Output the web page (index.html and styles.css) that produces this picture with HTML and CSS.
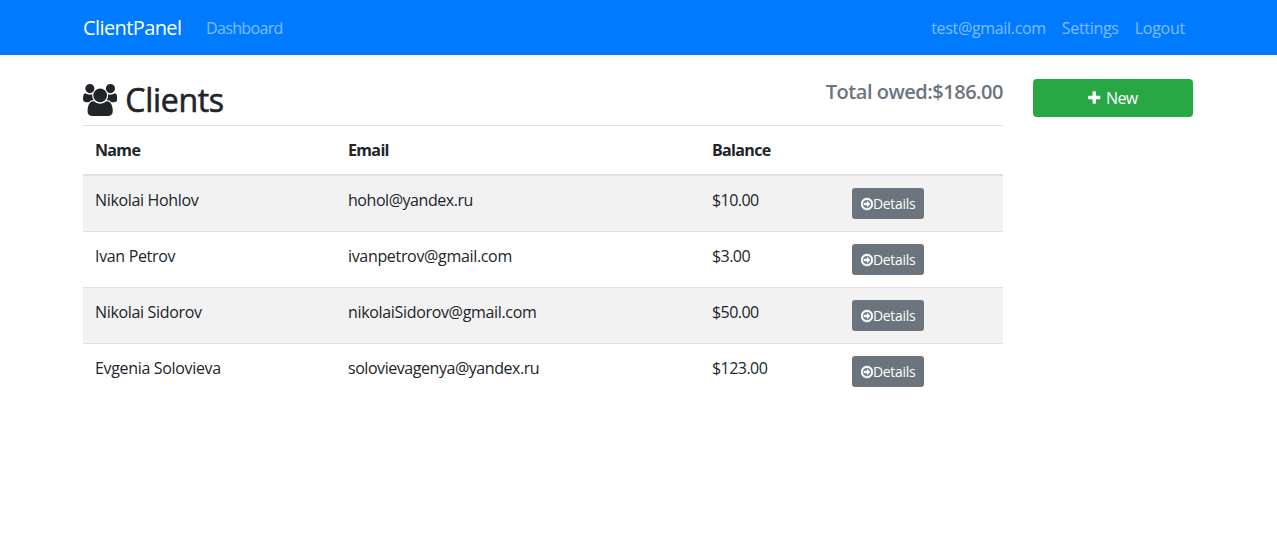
FILE: index.html
```html
<!DOCTYPE html>
<html lang="en">
<head>
<meta charset="utf-8">
<title>ClientPanel</title>
<link rel="stylesheet" href="styles.css">
</head>
<body>
<svg class="sprite" aria-hidden="true">
  <symbol id="users" viewBox="0 0 1920 1792"><path d="M593 896q-162 5-265 128H194q-82 0-138-40.500T0 865q0-353 124-353 6 0 43.500 21t97.500 42.500T384 597q67 0 133-23-5 37-5 66 0 139 81 256zm1071 637q0 120-73 189.500t-194 69.500H523q-121 0-194-69.500T256 1533q0-53 3.500-103.500t14-109T300 1212t43-97.500 62-81 85.500-53.500T602 960q10 0 43 21.500t73 48 107 48 135 21.500 135-21.500 107-48 73-48 43-21.500q61 0 111.500 20t85.500 53.500 62 81 43 97.500 26.500 108.500 14 109 3.500 103.500zM640 256q0 106-75 181t-181 75-181-75-75-181 75-181T384 0t181 75 75 181zm704 384q0 159-112.500 271.500T960 1024 688.500 911.500 576 640t112.500-271.500T960 256t271.500 112.500T1344 640zm576 225q0 78-56 118.500t-138 40.500h-134q-103-123-265-128 81-117 81-256 0-29-5-66 66 23 133 23 59 0 119-21.500t97.500-42.500 43.500-21q124 0 124 353zm-128-609q0 106-75 181t-181 75-181-75-75-181 75-181 181-75 181 75 75 181z"/></symbol>
  <symbol id="plus" viewBox="192 0 1408 1792"><path d="M1600 736v192q0 40-28 68t-68 28h-416v416q0 40-28 68t-68 28h-192q-40 0-68-28t-28-68v-416h-416q-40 0-68-28t-28-68v-192q0-40 28-68t68-28h416v-416q0-40 28-68t68-28h192q40 0 68 28t28 68v416h416q40 0 68 28t28 68z"/></symbol>
  <symbol id="arrow" viewBox="133 0 1536 1792"><path d="M1285 896q0 13-10 23l-320 320q-10 9-23 9-13 0-22.500-9.500t-9.500-22.500v-192h-352q-13 0-22.500-9.500t-9.500-22.500v-192q0-13 9.500-22.500t22.500-9.500h352v-192q0-14 9-23t23-9q12 0 24 10l319 319q9 9 9 23zm160 0q0-148-73-273t-198-198-273-73-273 73-198 198-73 273 73 273 198 198 273 73 273-73 198-198 73-273zm224 0q0 209-103 385.500t-279.500 279.500-385.500 103-385.500-103-279.500-279.500-103-385.500 103-385.500 279.500-279.500 385.500-103 385.500 103 279.500 279.500 103 385.500z"/></symbol>
</svg>
<nav class="navbar">
  <div class="container nav-row">
    <a class="brand">ClientPanel</a>
    <a class="nav-link dashboard">Dashboard</a>
    <div class="nav-right">
      <a class="nav-link mail">test@gmail.com</a>
      <a class="nav-link settings">Settings</a>
      <a class="nav-link logout">Logout</a>
    </div>
  </div>
</nav>
<div class="container page">
  <main class="main">
    <header class="head">
      <h2 class="title"><svg class="icon-users"><use href="#users"/></svg><span>Clients</span></h2>
      <h5 class="total">Total owed:$186.00</h5>
    </header>
    <table class="table">
      <colgroup><col class="c1"><col class="c2"><col class="c3"><col class="c4"></colgroup>
      <thead><tr><th>Name</th><th>Email</th><th>Balance</th><th></th></tr></thead>
      <tbody>
        <tr><td>Nikolai Hohlov</td><td class="email-ru">hohol@yandex.ru</td><td class="money">$10.00</td><td><a class="details"><svg class="icon-arrow"><use href="#arrow"/></svg><span>Details</span></a></td></tr>
        <tr><td>Ivan Petrov</td><td>ivanpetrov@gmail.com</td><td class="money">$3.00</td><td><a class="details"><svg class="icon-arrow"><use href="#arrow"/></svg><span>Details</span></a></td></tr>
        <tr><td>Nikolai Sidorov</td><td>nikolaiSidorov@gmail.com</td><td class="money">$50.00</td><td><a class="details"><svg class="icon-arrow"><use href="#arrow"/></svg><span>Details</span></a></td></tr>
        <tr><td>Evgenia Solovieva</td><td class="email-ru">solovievagenya@yandex.ru</td><td class="money">$123.00</td><td><a class="details"><svg class="icon-arrow"><use href="#arrow"/></svg><span>Details</span></a></td></tr>
      </tbody>
    </table>
  </main>
  <aside class="side"><a class="new"><svg class="icon-plus"><use href="#plus"/></svg><span>New</span></a></aside>
</div>
</body>
</html>
```
FILE: styles.css
```css
* { box-sizing: border-box; }
body { margin: 0; background: #fff; color: #212529; font: 400 16px/24px "Open Sans", "Noto Sans", sans-serif; letter-spacing: -0.33px; }
svg { fill: currentColor; flex: none; }
.sprite { display: none; }
.container { width: 1140px; margin-left: 68px; padding: 0 15px; }
.navbar { height: 55px; background: #007bff; }
.nav-row { display: flex; align-items: center; height: 55px; }
.brand { width: 99px; margin-right: 16px; color: #fff; font-size: 20px; line-height: 30px; letter-spacing: -0.6px; white-space: nowrap; }
.nav-link { padding: 0 8px; color: rgba(255, 255, 255, .5); white-space: nowrap; }
.dashboard { letter-spacing: -0.65px; }
.settings { letter-spacing: -0.3px; }
.logout { letter-spacing: -0.25px; }
.nav-right { display: flex; margin-left: auto; }
.page { display: flex; gap: 30px; padding-top: 24px; }
.main { width: 920px; }
.head { display: flex; justify-content: space-between; height: 46px; }
.title { display: flex; align-items: center; gap: 8px; height: 42px; margin: 0; font-size: 32px; font-weight: 500; line-height: 38px; letter-spacing: -0.3px; -webkit-text-stroke: 0.6px currentColor; }
.icon-users { width: 34.3px; height: 32px; margin-bottom: 1px; }
.total { margin: 0; color: #6c757d; font-size: 20px; font-weight: 600; line-height: 26px; letter-spacing: -0.48px; }
.table { width: 920px; table-layout: fixed; border-collapse: separate; border-spacing: 0; }
.c1 { width: 253px; }
.c2 { width: 364px; }
.c3 { width: 140px; }
.c4 { width: 163px; }
th, td { padding: 12px; text-align: left; vertical-align: top; border-top: 1px solid #dee2e6; }
th { height: 51px; border-bottom: 2px solid #dee2e6; font-weight: 700; letter-spacing: -0.65px; }
tbody tr:first-child td { border-top: 0; }
tbody tr:nth-child(odd) { background: #f2f2f2; }
.email-ru { letter-spacing: -0.45px; }
.money { letter-spacing: -0.55px; }
.details { display: flex; align-items: center; width: 72px; height: 31px; padding: 0 8px 0 9px; border-radius: 3px; background: #6c757d; color: #fff; font-size: 14px; line-height: 21px; }
.icon-arrow { width: 12px; height: 14px; stroke: currentColor; stroke-width: 50px; }
.side { width: 160px; }
.new { display: flex; justify-content: center; align-items: center; gap: 5px; height: 38px; border-radius: 4px; background: #28a745; color: #fff; letter-spacing: -0.6px; }
.icon-plus { width: 12.6px; height: 16px; }
```
